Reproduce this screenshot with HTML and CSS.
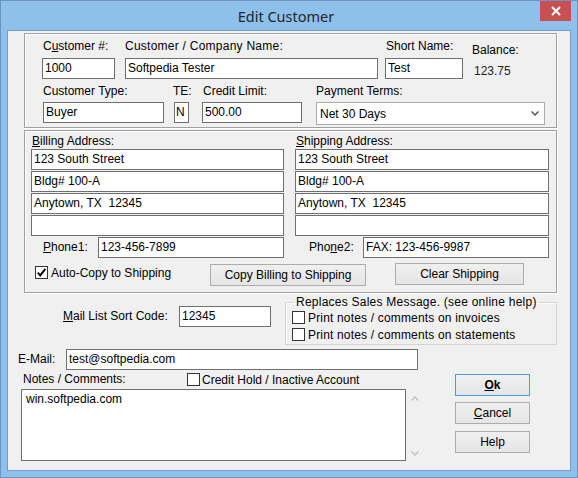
FILE: index.html
```html
<!DOCTYPE html>
<html>
<head>
<meta charset="utf-8">
<link rel="stylesheet" href="styles.css">
</head>
<body>
<div class="win">
  <div class="titlebar">
    <span></span>
    <div class="title">Edit Customer</div>
    <div class="close"><svg width="10" height="10" viewBox="0 0 10 10"><path d="M1 1L9 9M9 1L1 9" stroke="#fff" stroke-width="2"/></svg></div>
  </div>
  <div class="client">
    <div class="grp grp-top">
      <div class="row r1">
        <div class="fld f-cust"><div class="lbl pl1">C<u>u</u>stomer #:</div><div class="tb">1000</div></div>
        <div class="fld f-name"><div class="lbl wide">Customer / Company Name:</div><div class="tb">Softpedia Tester</div></div>
        <div class="fld f-short"><div class="lbl pl1">Short Name:</div><div class="tb">Test</div></div>
        <div class="fld f-bal"><div class="lbl">Balance:</div><div class="val">123.75</div></div>
      </div>
      <div class="row r2">
        <div class="fld f-type"><div class="lbl">Customer Type:</div><div class="tb">Buyer</div></div>
        <div class="fld f-te"><div class="lbl te-lbl">TE:</div><div class="tb">N</div></div>
        <div class="fld f-credit"><div class="lbl pl1">Credit Limit:</div><div class="tb">500.00</div></div>
        <div class="fld f-terms"><div class="lbl">Payment Terms:</div>
          <div class="combo"><span>Net 30 Days</span><svg width="8" height="5" viewBox="0 0 8 5"><path d="M0.5 0.5L4 4L7.5 0.5" stroke="#555" stroke-width="1.5" fill="none"/></svg></div>
        </div>
      </div>
    </div>

    <div class="grp grp-addr">
      <div class="cols">
        <div class="col">
          <div class="col-h"><u>B</u>illing Address:</div>
          <div class="tb ab">123 South Street</div>
          <div class="tb ab">Bldg# 100-A</div>
          <div class="tb ab">Anytown, TX&nbsp; 12345</div>
          <div class="tb ab"></div>
          <div class="phone">
            <div class="lbl ph1"><u>P</u>hone1:</div>
            <div class="tb ph-tb">123-456-7899</div>
          </div>
        </div>
        <div class="col col2">
          <div class="col-h"><u>S</u>hipping Address:</div>
          <div class="tb ab">123 South Street</div>
          <div class="tb ab">Bldg# 100-A</div>
          <div class="tb ab">Anytown, TX&nbsp; 12345</div>
          <div class="tb ab"></div>
          <div class="phone">
            <div class="lbl ph2">Pho<u>n</u>e2:</div>
            <div class="tb ph-tb">FAX: 123-456-9987</div>
          </div>
        </div>
      </div>
      <div class="addr-bottom">
        <div class="chk-item">
          <span class="cb"><svg width="11" height="11" viewBox="0 0 11 11"><path d="M1.8 5.6L4.2 8.4L9.4 1.8" fill="none" stroke="#000" stroke-width="1.9"/></svg></span>
          <span class="cb-lbl">Auto-Copy to Shipping</span>
        </div>
        <div class="btn b-copy">Copy Billing to Shipping</div>
        <div class="btn b-clear">Clear Shipping</div>
      </div>
    </div>

    <div class="secA">
      <div class="mail">
        <div class="lbl mail-lbl"><u>M</u>ail List Sort Code:</div>
        <div class="tb mail-tb">12345</div>
      </div>
      <fieldset class="rsm">
        <legend>Replaces Sales Message. (see online help)</legend>
        <div class="prow"><span class="cb"></span><span class="cb-lbl wide2">Print notes / comments on invoices</span></div>
        <div class="prow"><span class="cb"></span><span class="cb-lbl wide2">Print notes / comments on statements</span></div>
      </fieldset>
    </div>

    <div class="email">
      <div class="lbl email-lbl">E-Mail:</div>
      <div class="tb email-tb">test@softpedia.com</div>
    </div>

    <div class="secB">
      <div class="notes">
        <div class="nhead">
          <div class="lbl notes-lbl">Notes / Comments:</div>
          <span class="cb"></span><span class="cb-lbl">Credit Hold / Inactive Account</span>
        </div>
        <div class="nbody">
          <div class="ta">win.softpedia.com</div>
          <div class="sb">
            <svg width="8" height="5" viewBox="0 0 8 5"><path d="M0.5 4.5L4 1L7.5 4.5" stroke="#c2c2c2" stroke-width="1.5" fill="none"/></svg>
            <svg width="8" height="5" viewBox="0 0 8 5"><path d="M0.5 0.5L4 4L7.5 0.5" stroke="#c2c2c2" stroke-width="1.5" fill="none"/></svg>
          </div>
        </div>
      </div>
      <div class="btns">
        <div class="btn b-ok"><u>O</u>k</div>
        <div class="btn b-cancel"><u>C</u>ancel</div>
        <div class="btn b-help">Help</div>
      </div>
    </div>
  </div>
</div>
</body>
</html>
```

FILE: styles.css
```css
body {
  margin: 0;
  font-family: "Liberation Sans", Arial, sans-serif;
  font-size: 12px;
  color: #000;
}

.win {
  width: 578px;
  height: 478px;
  box-sizing: border-box;
  border: 1px solid #6b94c2;
  background: #8ec0ec;
  padding: 0 6px 6px;
}

.titlebar {
  height: 29px;
  margin: 0 -6px;
  padding-right: 6px;
  display: grid;
  grid-template-columns: 1fr auto 1fr;
}

.title {
  font-family: "Noto Sans", "Open Sans", sans-serif;
  font-size: 14.5px;
  line-height: 30px;
  color: #252525;
  text-align: center;
}

.close {
  justify-self: end;
  align-self: start;
  width: 31px;
  height: 20px;
  background: #c75050;
  display: flex;
  align-items: center;
  justify-content: center;
}

.client {
  box-sizing: border-box;
  width: 564px;
  height: 441px;
  border: 1px solid #729dcc;
  background: #f0f0f0;
}

.grp {
  box-sizing: border-box;
  width: 533px;
  margin: 2px 0 0 16px;
  border: 1px solid #a0a0a0;
  box-shadow: inset 1px 1px 0 #fff, 1px 1px 0 #fff;
}

.grp-top {
  height: 95px;
  padding-top: 5px;
}

.row {
  display: flex;
  align-items: flex-start;
}

.fld {
  display: flex;
  flex-direction: column;
}

.lbl {
  line-height: 15px;
  height: 15px;
  white-space: nowrap;
}

.wide {
  letter-spacing: 0.25px;
}

.wide2 {
  letter-spacing: 0.17px;
}

.pl1 {
  padding-left: 1px;
}

.r1 .lbl {
  margin-bottom: 4px;
}

.r2 {
  margin-top: 5px;
}

.r2 .lbl {
  margin-bottom: 3px;
}

.tb {
  box-sizing: border-box;
  height: 21px;
  border: 1px solid #6f6f6f;
  background: #fff;
  padding: 2px 2px;
  line-height: 15px;
  white-space: nowrap;
  overflow: hidden;
}

.f-cust { margin-left: 17px; width: 73px; }
.f-name { margin-left: 10px; width: 253px; }
.f-short { margin-left: 7px; width: 78px; }
.f-bal { margin-left: 9px; padding-top: 4px; }
.val {
  margin-top: 2px;
  padding-left: 2px;
  line-height: 15px;
  color: #222;
}

.f-type { margin-left: 18px; width: 121px; }
.f-te { margin-left: 10px; width: 15px; }
.te-lbl { margin-left: -1px; }
.f-te .tb { padding-left: 1px; }
.f-credit { margin-left: 13px; width: 100px; }
.f-terms { margin-left: 14px; width: 229px; }

.combo {
  box-sizing: border-box;
  height: 23px;
  border: 1px solid #acacac;
  background: #fff;
  display: flex;
  align-items: center;
  justify-content: space-between;
  padding: 0 5px 0 3px;
}

.grp-addr {
  height: 163px;
}

.cols {
  display: flex;
  padding-left: 6px;
}

.col {
  width: 253px;
}

.col2 {
  width: 254px;
  margin-left: 11px;
}

.col-h {
  margin-top: 3px;
  line-height: 15px;
  height: 15px;
  padding-left: 1px;
}

.ab {
  margin-bottom: 1px;
}

.phone {
  display: flex;
  align-items: center;
  margin-top: 1px;
}

.ph1 { margin-left: 12px; }
.ph2 { margin-left: 14px; }

.ph-tb {
  margin-left: auto;
  width: 186px;
}

.addr-bottom {
  display: flex;
  align-items: flex-start;
  margin-top: 6px;
  padding-left: 10px;
}

.chk-item {
  width: 175px;
  height: 17px;
  display: flex;
  align-items: center;
}

.cb {
  box-sizing: border-box;
  width: 13px;
  height: 13px;
  border: 1px solid #333;
  background: #fff;
  display: inline-flex;
  align-items: center;
  justify-content: center;
  flex: none;
}

.cb-lbl {
  margin-left: 3px;
  white-space: nowrap;
}

.btn {
  box-sizing: border-box;
  height: 22px;
  border: 1px solid #acacac;
  background: linear-gradient(#f0f0f0, #e5e5e5);
  display: flex;
  align-items: center;
  justify-content: center;
  white-space: nowrap;
}

.b-copy { width: 156px; }
.b-clear { width: 129px; margin-left: 29px; margin-top: -1px; }

.secA {
  display: flex;
  align-items: flex-start;
  height: 52px;
}

.mail {
  display: flex;
  align-items: center;
  margin: 13px 0 0 55px;
}

.mail-lbl { width: 116px; }
.mail-tb { width: 92px; }

.rsm {
  box-sizing: border-box;
  width: 272px;
  height: 50px;
  margin: 2px 0 0 14px;
  padding: 0;
  border: 1px solid #d3d3d3;
  box-shadow: inset 1px 1px 0 #fff;
  min-width: 0;
}

.rsm legend {
  margin-left: 8px;
  padding: 0 2px;
  line-height: 14px;
  height: 14px;
  white-space: nowrap;
  letter-spacing: 0.24px;
}

.prow {
  display: flex;
  align-items: center;
  height: 17px;
  padding-left: 6px;
}

.email {
  display: flex;
  align-items: center;
  margin: 4px 0 0 10px;
}

.email-lbl { width: 48px; }
.email-tb { width: 352px; }

.secB {
  display: flex;
  align-items: flex-start;
}

.notes {
  margin-left: 13px;
}

.nhead {
  display: flex;
  align-items: center;
  height: 17px;
  margin-top: 1px;
}

.notes-lbl {
  width: 164px;
  margin-left: 2px;
}

.nhead .cb-lbl {
  margin-left: 2px;
}

.nbody {
  display: flex;
  margin-top: 1px;
}

.ta {
  box-sizing: border-box;
  width: 385px;
  height: 72px;
  border: 1px solid #6f6f6f;
  background: #fff;
  padding: 2px 4px;
  line-height: 15px;
}

.sb {
  box-sizing: border-box;
  width: 17px;
  height: 72px;
  padding: 7px 0 5px;
  display: flex;
  flex-direction: column;
  justify-content: space-between;
  align-items: center;
}

.btns {
  margin: 4px 40px 0 auto;
  width: 75px;
  display: flex;
  flex-direction: column;
}

.b-ok {
  border-color: #4a9ae6;
  font-weight: bold;
}

.b-cancel { margin-top: 6px; }
.b-help { margin-top: 7px; }
```
